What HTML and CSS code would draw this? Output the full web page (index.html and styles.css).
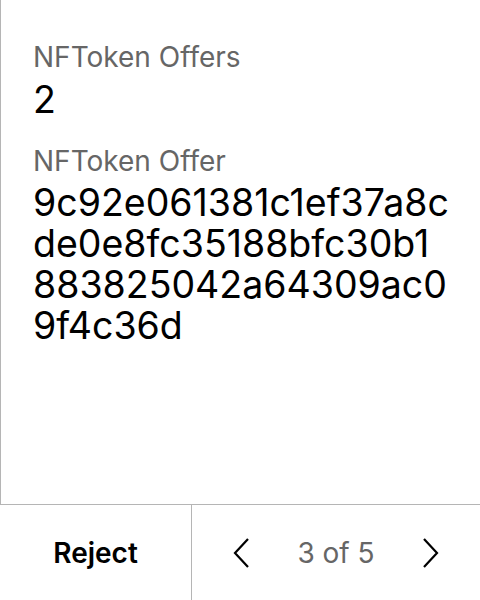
FILE: index.html
```html
<!DOCTYPE html>
<html>
<head>
<meta charset="utf-8">
<link rel="stylesheet" href="styles.css">
</head>
<body>
<div class="screen">
  <main class="content">
    <div class="field">
      <div class="label">NFToken Offers</div>
      <div class="value">2</div>
    </div>
    <div class="field">
      <div class="label">NFToken Offer</div>
      <div class="value hash">9c92e061381c1ef37a8cde0e8fc35188bfc30b1883825042a64309ac09f4c36d</div>
    </div>
  </main>
  <footer class="footer">
    <button class="reject">Reject</button>
    <div class="pager">
      <svg class="chev" viewBox="0 0 20 32" width="20" height="32"><path d="M16 2 L3 16 L16 30" fill="none" stroke="#000" stroke-width="2.2"/></svg>
      <span class="count">3 of 5</span>
      <svg class="chev" viewBox="0 0 20 32" width="20" height="32"><path d="M4 2 L17 16 L4 30" fill="none" stroke="#000" stroke-width="2.2"/></svg>
    </div>
  </footer>
</div>
</body>
</html>
```
FILE: styles.css
```css
html, body {
  margin: 0;
  padding: 0;
  background: #fff;
}
body {
  font-family: Inter, "Noto Sans", sans-serif;
  color: #000;
}
.screen {
  width: 480px;
  height: 600px;
  display: flex;
  flex-direction: column;
}
.content {
  flex: 1;
  border-left: 1px solid #b5b5b5;
  padding: 41px 28px 0 32px;
  display: flex;
  flex-direction: column;
  gap: 25px;
}
.field {
  display: flex;
  flex-direction: column;
  gap: 4px;
}
.label {
  font-size: 28px;
  line-height: 1.2;
  color: #666;
}
.value {
  font-size: 37.5px;
  line-height: 41px;
  color: #000;
}
.hash {
  word-break: break-all;
}
.footer {
  height: 95px;
  border-top: 1px solid #b5b5b5;
  display: grid;
  grid-template-columns: 192px 1fr;
}
.reject {
  border: none;
  border-right: 1px solid #b5b5b5;
  background: none;
  font-family: inherit;
  font-size: 28px;
  font-weight: 600;
  color: #000;
  padding: 0;
}
.pager {
  display: flex;
  align-items: center;
  justify-content: space-between;
  padding: 0 40px;
}
.count {
  font-size: 28px;
  color: #666;
}
.chev {
  display: block;
}
```
